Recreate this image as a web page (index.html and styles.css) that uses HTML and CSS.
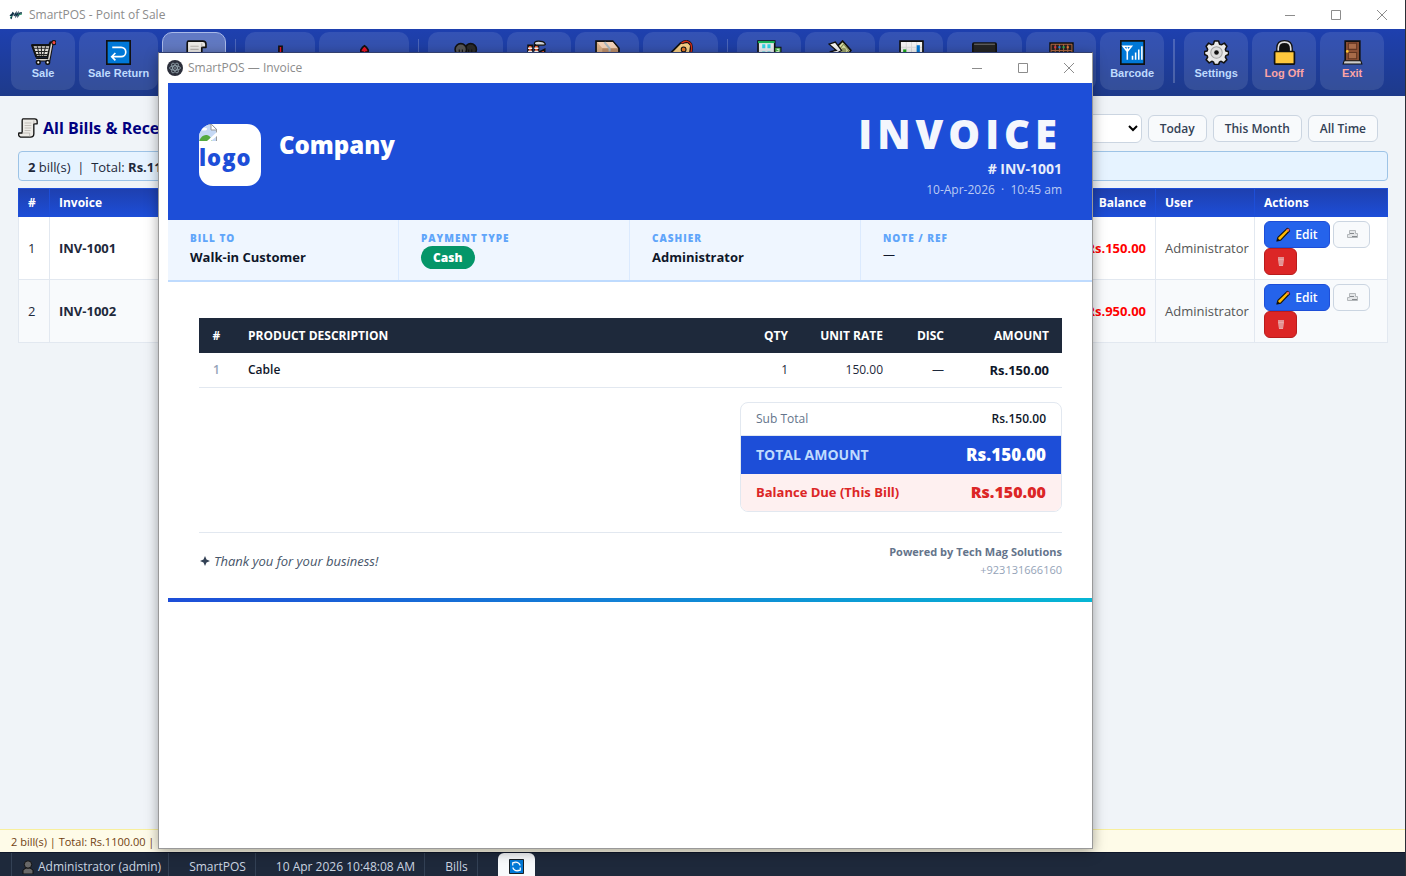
FILE: index.html
```html
<!DOCTYPE html>
<html lang="en">
<head>
    <meta charset="UTF-8">
    <meta name="viewport" content="width=device-width, initial-scale=1.0">
    <title>SmartPOS - Point of Sale</title>
    <link rel="stylesheet" href="styles.css">
</head>
<body>
    <!-- Shared icons -->
    <svg class="sprite" aria-hidden="true">
        <symbol id="i-scroll" viewBox="0 0 24 24"><path d="M6 1h14q3 0 3 3v3h-4v12q0 4-4 4H3q-3-1-2-5h4V4q0-3 1-3z" fill="#eceae6" stroke="#111" stroke-width="1.600" stroke-linejoin="round"/><path d="M19 7V3M5 18h9v4M8 6h8M8 9h8M8 12h8M8 15h7" fill="none" stroke="#b9b5b0" stroke-width="1"/></symbol>
        <symbol id="i-pencil" viewBox="0 0 16 16"><path d="M1 15l1-4L12 1.500q2 0 2.500 2.500L5 14z" fill="#ffb900" stroke="#111" stroke-width="1.200" stroke-linejoin="round"/><path d="M11 2.500l2.500 2.500 1-2-1.500-1.500z" fill="#e6606a"/><path d="M1 15l1-3 2 2z" fill="#111"/></symbol>
        <symbol id="i-print" viewBox="0 0 12 12"><path d="M3.500 2.500h6v3h2v4h-10v-3h2z" fill="#e4e6e8" stroke="#b3b7ba"/><path d="M4 5.500h4M6 8.500h5" stroke="#85898d"/></symbol>
        <symbol id="i-trash" viewBox="0 0 10 12"><path d="M2 2h6v2l-1 7H3L2 4z" fill="#eba7a7"/><path d="M2 3h6M4 5v5M6 5v5" stroke="#d98080"/></symbol>
        <symbol id="i-min" viewBox="0 0 12 12"><path d="M1 6.500h10" stroke="#8c8c8c"/></symbol>
        <symbol id="i-max" viewBox="0 0 12 12"><path d="M1.500 1.500h9v9h-9z" fill="none" stroke="#8c8c8c"/></symbol>
        <symbol id="i-close" viewBox="0 0 12 12"><path d="M1 1l10 10M11 1L1 11" stroke="#8c8c8c"/></symbol>
    </svg>

    <div class="app">
        <header class="titlebar">
            <svg class="app-logo" viewBox="0 0 14 10"><path d="M1 6l3-3M2 6q2-1 3-3M4 2L2 9M5 6l2-3v3l2-3v3l2-3h2" fill="none" stroke="#12344a" stroke-width="1.300"/><path d="M1 8l2-2M9 5l4-1" stroke="#2c9a68"/></svg>
            <span class="titlebar-text">SmartPOS - Point of Sale</span>
            <div class="win-controls">
                <button aria-label="Minimize"><svg><use href="#i-min"/></svg></button>
                <button aria-label="Maximize"><svg><use href="#i-max"/></svg></button>
                <button aria-label="Close"><svg><use href="#i-close"/></svg></button>
            </div>
        </header>

        <nav class="toolbar">
            <button class="tool"><svg viewBox="0 0 24 24"><path d="M1 6h17l2-4" fill="none" stroke="#111" stroke-width="4"/><path d="M1 5h18l-3 11H5z" fill="#e3dfda" stroke="#111" stroke-width="2" stroke-linejoin="round"/><path d="M2 8h15M3 11h13M4 14h12M6 6l2 9M10 6v9M14 6l-2 9" stroke="#222"/><path d="M5 19h12l3-16 2-1" fill="none" stroke="#111" stroke-width="3.500"/><path d="M5 19h12l3-16" fill="none" stroke="#d9d4cf" stroke-width="1.500"/><circle cx="22" cy="2.500" r="2" fill="#f4473b" stroke="#111"/><circle cx="7" cy="21.500" r="1.800" fill="#fff" stroke="#111" stroke-width="1.500"/><circle cx="16" cy="21.500" r="1.800" fill="#fff" stroke="#111" stroke-width="1.500"/></svg><span>Sale</span></button>
            <button class="tool"><svg viewBox="0 0 24 24"><rect x=".8" y=".8" width="22.400" height="22.400" fill="#0078d7" stroke="#111" stroke-width="1.600"/><path d="M6 7h8.500a4.500 4.500 0 0 1 0 9H6M9 12.500L5.500 16l3.500 3.500" fill="none" stroke="#fff" stroke-width="1.600"/></svg><span>Sale Return</span></button>
            <button class="tool active" aria-label="Bills"><svg><use href="#i-scroll"/></svg></button>
            <i class="divider"></i>
            <button class="tool medium" aria-label="Purchase"><svg viewBox="0 0 24 24"><path d="M10.500 6h3v7h4l-5.500 8-5.500-8h4z" fill="#e81224" stroke="#111" stroke-width="1.600"/></svg></button>
            <button class="tool xlarge" aria-label="Purchase Return"><svg viewBox="0 0 24 24"><path d="M12 5.500q-2 1-3.500 4v2h2V20h3v-8.500h2v-2q-1.500-3-3.500-4z" fill="#e81224" stroke="#111" stroke-width="1.600"/></svg></button>
            <i class="divider"></i>
            <button class="tool large" aria-label="Customers"><svg viewBox="0 0 24 24"><circle cx="17" cy="9" r="5.500" fill="#2b2b2b" stroke="#111" stroke-width="1.500"/><circle cx="7.500" cy="9" r="5.500" fill="#555" stroke="#111" stroke-width="1.500"/><path d="M6 9v3M9 9v3M15 9v3M18 9v3" stroke="#111"/><path d="M1 22q0-7 6-7t6 7zM12 22q0-7 5-7t6 7z" fill="#444" stroke="#111"/></svg></button>
            <button class="tool" aria-label="Suppliers"><svg viewBox="0 0 24 24"><path d="M1 22V5h4v8h2V5h4v7l6-3v4l7-1v10z" fill="#f05a32" stroke="#111" stroke-width="1.500"/><path d="M1 8h4M7 8h4M1 11h4M7 11h4" stroke="#fff" stroke-width="1.500"/><path d="M7 4q0-3 4-3 5 0 6 2 2 2-3 2h-5z" fill="#d2d5d8" stroke="#111" stroke-width="1.200"/></svg></button>
            <button class="tool" aria-label="Products"><svg viewBox="0 0 24 24"><path d="M1 1h16l6 7v15H1z" fill="#d9ae86" stroke="#111" stroke-width="1.600"/><path d="M2 2h15l5 6H7z" fill="#f3d2b8"/><path d="M7 8h15v14H7z" fill="#bc8d68"/><path d="M9 2l5 6v3" fill="none" stroke="#a9b8bf" stroke-width="2"/></svg></button>
            <button class="tool large" aria-label="Categories"><svg viewBox="0 0 24 24"><path d="M1 14L12 3l7-1 3 3-1 8-10 10z" fill="#f7ce85" stroke="#111" stroke-width="1.600"/><circle cx="15" cy="9" r="2.300" fill="#e87524" stroke="#111"/><path d="M13 3q6-4 9 1 2 7-2 12" fill="none" stroke="#111" stroke-width="2.500"/><path d="M13 3q6-4 9 1 2 7-2 12" fill="none" stroke="#d82b18" stroke-width="1.300"/></svg></button>
            <i class="divider"></i>
            <button class="tool" aria-label="Banks"><svg viewBox="0 0 24 24"><path d="M1 1h16v22H1z" fill="#e7ebee" stroke="#111" stroke-width="1.600"/><path d="M1 2h16" stroke="#18b65a" stroke-width="2"/><path d="M5 4h3v4H5zM10 4h3v4h-3zM5 11h3v3H5zM10 11h3v3h-3z" fill="#30d4e4"/><path d="M17 7h6v16h-6z" fill="#4bb74f" stroke="#111"/><path d="M19 9h2v2h-2v2h2" fill="none" stroke="#d9f2ce"/></svg></button>
            <button class="tool medium" aria-label="Expenses"><svg viewBox="0 0 24 24"><path d="M7 8l7-7 8 9-9 12-8-7z" fill="#dde2a8" stroke="#111" stroke-width="1.600"/><path d="M11 9l4-5 5 6-6 7z" fill="none" stroke="#899157"/><circle cx="15" cy="10" r="2.500" fill="#9ba46a"/><path d="M1 4l6-2 6 8-5 3-5-2 5-1z" fill="#f2f2f2" stroke="#111" stroke-width="1.200"/></svg></button>
            <button class="tool" aria-label="Reports"><svg viewBox="0 0 24 24"><path d="M1 1h22v22H1z" fill="#f4f4f4" stroke="#111" stroke-width="1.600"/><path d="M7 2v20M12 2v20M17 2v20M2 7h20" stroke="#ddd"/><path d="M4 9h3v13H4z" fill="#16a817"/><path d="M10 12h3v10h-3z" fill="#e34524"/><path d="M17 5h3v17h-3z" fill="#0078d7"/></svg></button>
            <button class="tool large" aria-label="Cash Book"><svg viewBox="0 0 24 24"><rect x=".8" y="3" width="22.400" height="15" rx="1" fill="#242424" stroke="#111" stroke-width="1.600"/><path d="M2 4h20" stroke="#777"/><path d="M9 18h6v4H9z" fill="#777"/></svg></button>
            <button class="tool medium" aria-label="Accounts"><svg viewBox="0 0 24 24"><path d="M1 3h22v20H1z" fill="#28201d" stroke="#111" stroke-width="1.500"/><path d="M2 4h20M2 10h20M2 16h20M6 4v18M10 4v18M14 4v18M18 4v18M2 4v18M22 4v18" stroke="#ae6641"/><path d="M5 6h2v2H5zM13 12h2v2h-2z" fill="#e83445"/><path d="M9 6h2v2H9zM17 12h2v2h-2z" fill="#1d88df"/><path d="M13 6h2v2h-2zM5 12h2v2H5z" fill="#28ae4b"/><path d="M17 6h2v2h-2zM9 12h2v2H9z" fill="#ed7b38"/></svg></button>
            <button class="tool"><svg viewBox="0 0 24 24"><path d="M.8.8h22.400v22.400H.8z" fill="#0078d7" stroke="#111" stroke-width="1.600"/><path d="M3 6h8L7 11zM7 7v12M12 19v-4M15 19v-7M18 19V9M21 19V6" fill="none" stroke="#fff" stroke-width="1.500"/></svg><span>Barcode</span></button>
            <i class="divider wide"></i>
            <button class="tool"><svg viewBox="0 0 24 24"><path d="M10 1h4l1 3 2 .5L19.500 3 22 6l-1.500 3 .5 1.500 2.500.5v3l-2.500 1-.5 1.500L22 19l-3 3-2.500-1.500-1.500.5-1 2.500h-4L9 21l-1.500-.5L5 22l-3-3 1.500-2.500L3 15l-2.500-1v-3L3 10.500 3.500 9 2 6l2.500-3L7 4.500 9 4z" fill="#e9e9e9" stroke="#111" stroke-width="1.500" stroke-linejoin="round"/><circle cx="12" cy="12" r="5.500" fill="#ddd" stroke="#a5a5a5"/><circle cx="12" cy="12" r="2.200" fill="#111"/></svg><span>Settings</span></button>
            <button class="tool danger"><svg viewBox="0 0 24 24"><path d="M6 12V8q0-6 6-6t6 6v4" fill="#111" stroke="#111" stroke-width="4"/><path d="M6 12V8q0-6 6-6t6 6v4" fill="none" stroke="#dedede" stroke-width="1.600"/><rect x="2.500" y="11" width="19" height="12.200" rx="1" fill="#ffc83d" stroke="#111" stroke-width="1.600"/></svg><span>Log Off</span></button>
            <button class="tool danger"><svg viewBox="0 0 24 24"><path d="M5 1h14v20H5z" fill="#8d5136" stroke="#111" stroke-width="1.600"/><path d="M8 3h8v6H8zM8 12h8v6H8z" fill="#a86b49" stroke="#623520"/><path d="M4 20h16l1 3H3z" fill="#ccc" stroke="#111"/><circle cx="7" cy="11" r="1.300" fill="#ffc52e"/></svg><span>Exit</span></button>
        </nav>

        <main class="content">
            <div class="page-head">
                <h1><svg><use href="#i-scroll"/></svg>All Bills &amp; Rece</h1>
                <div class="filters">
                    <select aria-label="Bill type"><option></option><option>Cash</option><option>Credit</option></select>
                    <button>Today</button>
                    <button>This Month</button>
                    <button>All Time</button>
                </div>
            </div>

            <div class="summary"><b>2</b> bill(s) &nbsp;|&nbsp; Total: <b>Rs.1100.00</b></div>

            <table class="bills">
                <colgroup>
                    <col class="c-no"><col class="c-inv"><col><col class="c-bal"><col class="c-user"><col class="c-act">
                </colgroup>
                <thead>
                    <tr><th>#</th><th>Invoice</th><th></th><th class="num">Balance</th><th>User</th><th>Actions</th></tr>
                </thead>
                <tbody>
                    <tr>
                        <td>1</td><td><b>INV-1001</b></td><td></td>
                        <td class="num due">Rs.150.00</td><td class="user">Administrator</td>
                        <td><div class="actions">
                            <button class="edit"><svg><use href="#i-pencil"/></svg>Edit</button>
                            <button class="print" aria-label="Print"><svg><use href="#i-print"/></svg></button>
                            <button class="delete" aria-label="Delete"><svg><use href="#i-trash"/></svg></button>
                        </div></td>
                    </tr>
                    <tr>
                        <td>2</td><td><b>INV-1002</b></td><td></td>
                        <td class="num due">Rs.950.00</td><td class="user">Administrator</td>
                        <td><div class="actions">
                            <button class="edit"><svg><use href="#i-pencil"/></svg>Edit</button>
                            <button class="print" aria-label="Print"><svg><use href="#i-print"/></svg></button>
                            <button class="delete" aria-label="Delete"><svg><use href="#i-trash"/></svg></button>
                        </div></td>
                    </tr>
                </tbody>
            </table>
        </main>

        <div class="totals-bar">2 bill(s) | Total: Rs.1100.00 |</div>

        <footer class="statusbar">
            <span class="seg user-seg"><svg viewBox="0 0 12 14"><path d="M1 14v-4l3-2h4l3 2v4z" fill="#686868" stroke="#111"/><circle cx="6" cy="4.500" r="3.700" fill="#686868" stroke="#111"/></svg>Administrator (admin)</span>
            <span class="seg">SmartPOS</span>
            <span class="seg">10 Apr 2026 10:48:08 AM</span>
            <span class="seg">Bills</span>
            <button class="refresh" aria-label="Refresh"><svg viewBox="0 0 16 16"><path d="M.5.5h15v15H.5z" fill="#0078d7" stroke="#111"/><path d="M4 7V4h3M4 4q6-2 8 3M12 9v3H9M12 12q-6 2-8-3" fill="none" stroke="#fff" stroke-width="1.300"/></svg></button>
        </footer>
    </div>

    <!-- Invoice window -->
    <section class="invoice-window">
        <header class="titlebar">
            <svg class="electron" viewBox="0 0 16 16"><circle cx="8" cy="8" r="8" fill="#2b2e3a"/><g fill="none" stroke="#a9bcc4" stroke-width=".7"><ellipse cx="8" cy="8" rx="5.500" ry="2.200"/><ellipse cx="8" cy="8" rx="5.500" ry="2.200" transform="rotate(60 8 8)"/><ellipse cx="8" cy="8" rx="5.500" ry="2.200" transform="rotate(120 8 8)"/></g><circle cx="8" cy="8" r=".8" fill="#a9bcc4"/></svg>
            <span class="titlebar-text">SmartPOS — Invoice</span>
            <div class="win-controls">
                <button aria-label="Minimize"><svg><use href="#i-min"/></svg></button>
                <button aria-label="Maximize"><svg><use href="#i-max"/></svg></button>
                <button aria-label="Close"><svg><use href="#i-close"/></svg></button>
            </div>
        </header>

        <div class="invoice">
            <div class="inv-head">
                <div class="brand">
                    <div class="logo-box">
                        <svg viewBox="0 0 18 17"><path d="M0 0h13l5 5v12H0z" fill="#c5d8f4"/><path d="M0 .500h12.500l5 5V17" fill="none" stroke="#9a9a9a"/><path d="M12 0v6h6z" fill="#fff" stroke="#9a9a9a"/><ellipse cx="5" cy="5" rx="3" ry="1.500" fill="#fff"/><path d="M0 17q3-7 8-6 4 1 5 6z" fill="#53a93f"/><path d="M8 17L18 8v4l-6 5z" fill="#fff"/></svg>
                        <span>logo</span>
                    </div>
                    <h2>Company</h2>
                </div>
                <div class="inv-title">
                    <div class="word">INVOICE</div>
                    <div class="inv-no"># INV-1001</div>
                    <div class="inv-date">10-Apr-2026 &nbsp;·&nbsp; 10:45 am</div>
                </div>
            </div>

            <div class="inv-meta">
                <div><h3>BILL TO</h3><p>Walk-in Customer</p></div>
                <div><h3>PAYMENT TYPE</h3><span class="badge">Cash</span></div>
                <div><h3>CASHIER</h3><p>Administrator</p></div>
                <div><h3>NOTE / REF</h3><p class="note">—</p></div>
            </div>

            <div class="inv-body">
                <table class="items">
                    <colgroup><col class="c-n"><col><col class="c-qty"><col class="c-rate"><col class="c-disc"><col class="c-amt"></colgroup>
                    <thead>
                        <tr><th class="ctr">#</th><th>PRODUCT DESCRIPTION</th><th class="num">QTY</th><th class="num">UNIT RATE</th><th class="num">DISC</th><th class="num">AMOUNT</th></tr>
                    </thead>
                    <tbody>
                        <tr><td class="ctr idx">1</td><td class="prod">Cable</td><td class="num">1</td><td class="num">150.00</td><td class="num">—</td><td class="num amt">Rs.150.00</td></tr>
                    </tbody>
                </table>

                <div class="totals">
                    <div class="row sub"><span>Sub Total</span><b>Rs.150.00</b></div>
                    <div class="row grand"><span>TOTAL AMOUNT</span><b>Rs.150.00</b></div>
                    <div class="row balance"><span>Balance Due (This Bill)</span><b>Rs.150.00</b></div>
                </div>

                <div class="inv-foot">
                    <em><svg viewBox="0 0 10 10"><path d="M5 0l1.500 3.500L10 5 6.500 6.500 5 10 3.500 6.500 0 5l3.500-1.500z" fill="#334155"/></svg>Thank you for your business!</em>
                    <div class="powered"><b>Powered by Tech Mag Solutions</b><span>+923131666160</span></div>
                </div>
            </div>
            <div class="stripe"></div>
        </div>
    </section>
</body>
</html>
```

FILE: styles.css
```css
* {
    box-sizing: border-box;
}

body {
    margin: 0;
    font-family: "Segoe UI", "Open Sans", sans-serif;
    font-size: 13px;
    line-height: 18px;
    color: #1e293b;
}

h1, h2, h3, p {
    margin: 0;
}

button, select {
    font-family: inherit;
    font-size: 12px;
    padding: 0;
}

.sprite {
    display: none;
}

.app {
    display: flex;
    flex-direction: column;
    height: 100vh;
    background: #f0f4f8;
    border-right: 1px solid #2b2f36;
}

/* Window title bars */
.titlebar {
    display: flex;
    align-items: center;
    flex: none;
    height: 29px;
    padding-left: 9px;
    background: #fff;
    color: #8c8c8c;
    font-size: 12px;
}

.app-logo {
    width: 14px;
    height: 10px;
    margin-right: 6px;
}

.titlebar-text {
    flex: 1;
}

.win-controls {
    display: flex;
}

.win-controls button {
    display: flex;
    align-items: center;
    justify-content: center;
    width: 46px;
    height: 28px;
    border: 0;
    background: none;
}

.win-controls svg {
    width: 12px;
    height: 12px;
}

/* Main toolbar */
.toolbar {
    display: flex;
    gap: 4px;
    flex: none;
    height: 67px;
    padding: 3px 11px;
    background: linear-gradient(#1e40af, #1e3a8a);
}

.tool {
    display: flex;
    flex-direction: column;
    align-items: center;
    flex: none;
    min-width: 64px;
    height: 58px;
    padding: 8px 9px 0;
    border: 0;
    border-radius: 10px;
    background: rgba(255, 255, 255, 0.1);
    color: #bfdbfe;
    font: bold 11px/15px "Liberation Sans", Arial, sans-serif;
}

.tool.medium { min-width: 70px; }
.tool.large { min-width: 75px; }
.tool.xlarge { min-width: 90px; }

.tool svg {
    width: 25px;
    height: 25px;
    margin-bottom: 1px;
}

.tool.active {
    border: 1px solid #a9b9e8;
    background: rgba(255, 255, 255, 0.3);
    padding-top: 7px;
}

.tool.danger {
    color: #fca5a5;
}

.divider {
    flex: none;
    width: 1px;
    height: 44px;
    margin: 7px 5px;
    background: rgba(255, 255, 255, 0.2);
}

.divider.wide {
    width: 2px;
}

/* Bills page */
.content {
    flex: 1;
    padding: 17px 17px 0 18px;
}

.page-head {
    display: flex;
    align-items: center;
    justify-content: space-between;
    height: 30px;
    margin-bottom: 8px;
    padding-right: 10px;
}

.page-head h1 {
    display: flex;
    align-items: center;
    gap: 5px;
    color: #000080;
    font-size: 16px;
    font-weight: 700;
}

.page-head h1 svg {
    width: 20px;
    height: 20px;
}

.filters {
    display: flex;
    align-items: center;
    gap: 6px;
}

.filters select {
    width: 150px;
    height: 29px;
    padding-left: 8px;
    border: 1px solid #cbd5e1;
    border-radius: 6px;
    background: #fff;
}

.filters button {
    height: 27px;
    padding: 0 11px;
    border: 1px solid #cbd5e1;
    border-radius: 6px;
    background: #f8fafc;
    color: #334155;
    font-weight: 600;
}

.summary {
    height: 30px;
    margin-bottom: 7px;
    padding: 6px 9px;
    border: 1px solid #9dc3e6;
    border-radius: 4px;
    background: #e6f3ff;
}

.bills {
    width: 100%;
    table-layout: fixed;
    border-collapse: collapse;
    background: #fff;
}

.bills .c-no { width: 31px; }
.bills .c-inv { width: 130px; }
.bills .c-bal { width: 110px; }
.bills .c-user { width: 99px; }
.bills .c-act { width: 133px; }

.bills tr {
    height: 63px;
}

.bills thead tr {
    height: 28px;
    background: linear-gradient(#1e40af, #1d4ed8);
}

.bills th {
    padding: 0 9px;
    border: 1px solid #1d4ed8;
    color: #fff;
    font-size: 12px;
    text-align: left;
}

.bills td {
    padding: 3px 9px 4px;
    border: 1px solid #e2e8f0;
}

.bills tbody tr:nth-child(even) {
    background: #f8fafc;
}

.bills .num, .items .num {
    text-align: right;
}

.bills .due {
    color: #f00;
    font-weight: 700;
}

.bills .user {
    padding-right: 0;
    color: #555;
}

.actions {
    display: flex;
    flex-wrap: wrap;
    column-gap: 3px;
}

.actions button {
    display: flex;
    align-items: center;
    justify-content: center;
    height: 27px;
    border: 1px solid #cbd5e1;
    border-radius: 6px;
    background: #f8fafc;
}

.actions .edit {
    gap: 4px;
    width: 66px;
    border-color: #1d4ed8;
    background: #2563eb;
    color: #fff;
    font-weight: 600;
}

.actions .edit svg {
    width: 15px;
    height: 15px;
}

.actions .print {
    width: 37px;
}

.actions .print svg {
    width: 12px;
    height: 12px;
}

.actions .delete {
    width: 33px;
    border-color: #b91c1c;
    background: #dc2626;
}

.actions .delete svg {
    width: 10px;
    height: 12px;
}

/* Bottom bars */
.totals-bar {
    flex: none;
    height: 23px;
    padding: 3px 11px;
    border-top: 1px solid #f8ef9c;
    background: #fefbe8;
    color: #713f12;
    font-size: 11px;
}

.statusbar {
    display: flex;
    flex: none;
    height: 24px;
    padding-left: 11px;
    border-top: 1px solid #0f172a;
    background: #1e293b;
    color: #cbd5e1;
    font-size: 12px;
}

.seg {
    padding: 5px 9px 0 20px;
    border-right: 1px solid #334155;
}

.user-seg {
    display: flex;
    gap: 4px;
    padding-right: 7px;
    padding-left: 10px;
    border-left: 1px solid #334155;
}

.user-seg svg {
    width: 12px;
    height: 14px;
    margin-top: 2px;
}

.refresh {
    width: 37px;
    margin-left: 20px;
    padding-top: 6px;
    border: 0;
    border-radius: 6px 6px 0 0;
    background: #f8fafc;
}

.refresh svg {
    width: 15px;
    height: 15px;
}

/* Invoice window */
.invoice-window {
    position: absolute;
    top: 52px;
    right: 313px;
    bottom: 27px;
    left: 158px;
    border: 1px solid #999;
    border-top-color: #33406e;
    background: #fff;
    box-shadow: 0 3px 12px rgba(0, 0, 0, 0.35);
}

.invoice-window .titlebar {
    height: 30px;
    padding-left: 8px;
}

.electron {
    width: 16px;
    height: 16px;
    margin-right: 5px;
}

.invoice {
    margin-left: 9px;
}

.inv-head {
    display: flex;
    justify-content: space-between;
    align-items: flex-start;
    padding: 30px 30px 21px 31px;
    background: #1d4ed8;
    color: #fff;
}

.brand {
    display: flex;
    gap: 18px;
    padding-top: 11px;
}

.logo-box {
    width: 62px;
    height: 62px;
    overflow: hidden;
    border-radius: 14px;
    background: #fff;
    color: #1d4ed8;
    font-size: 22px;
    font-weight: 800;
    letter-spacing: 1px;
}

.logo-box svg {
    display: block;
    width: 18px;
    height: 17px;
}

.logo-box span {
    display: block;
    line-height: 32px;
}

.brand h2 {
    font-size: 24px;
    font-weight: 800;
    line-height: 42px;
}

.inv-title {
    text-align: right;
}

.inv-title .word {
    color: #f4f6fd;
    font-size: 40px;
    font-weight: 800;
    line-height: 42px;
    letter-spacing: 5px;
}

.inv-title .inv-no {
    margin-top: 4px;
    color: #e8edfb;
    font-size: 14px;
    font-weight: 700;
    line-height: 20px;
}

.inv-title .inv-date {
    margin-top: 2px;
    color: #bbcaf3;
    font-size: 12px;
}

.inv-meta {
    display: grid;
    grid-template-columns: repeat(4, 1fr);
    height: 62px;
    border-bottom: 2px solid #bfdbfe;
    background: #eff6ff;
}

.inv-meta > div {
    padding: 11px 22px 0;
    border-right: 1px solid #dbeafe;
}

.inv-meta > div:last-child {
    border-right: 0;
}

.inv-meta h3 {
    color: #60a5fa;
    font-size: 10px;
    font-weight: 800;
    line-height: 14px;
    letter-spacing: 1px;
}

.inv-meta p {
    margin-top: 3px;
    color: #0f172a;
    font-weight: 700;
}

.inv-meta .note {
    margin-top: 1px;
    font-size: 12px;
    font-weight: 400;
}

.badge {
    display: inline-block;
    margin-top: 1px;
    padding: 0 12px;
    border-radius: 12px;
    background: #059669;
    color: #fff;
    font-size: 12px;
    font-weight: 800;
    line-height: 23px;
}

.inv-body {
    padding: 36px 30px 19px 31px;
}

.items {
    width: 100%;
    table-layout: fixed;
    border-collapse: collapse;
}

.items .c-n { width: 35px; }
.items .c-qty { width: 90px; }
.items .c-rate { width: 95px; }
.items .c-disc { width: 61px; }
.items .c-amt { width: 105px; }

.items th {
    height: 35px;
    padding: 0 13px 0 14px;
    background: #1e293b;
    color: #fff;
    font-size: 12px;
    text-align: left;
    white-space: nowrap;
}

.items td {
    height: 34px;
    padding: 0 13px 0 14px;
    border-bottom: 1px solid #e2e8f0;
    font-size: 12px;
}

.items .ctr {
    padding: 0;
    text-align: center;
}

.items .idx {
    color: #94a3b8;
    font-weight: 600;
}

.items .prod {
    color: #0f172a;
    font-weight: 600;
}

.items .amt {
    color: #0f172a;
    font-size: 13px;
    font-weight: 700;
}

.totals {
    width: 322px;
    margin: 14px 0 20px auto;
    overflow: hidden;
    border: 1px solid #e2e8f0;
    border-radius: 8px;
}

.totals .row {
    display: flex;
    align-items: center;
    justify-content: space-between;
    height: 38px;
    padding: 0 15px;
}

.totals .sub {
    height: 33px;
    border-bottom: 1px solid #e2e8f0;
    color: #64748b;
    font-size: 12px;
}

.totals .sub b {
    color: #0f172a;
    font-weight: 600;
}

.totals .grand {
    background: #1d4ed8;
    color: #bfdbfe;
    font-size: 14px;
    font-weight: 700;
}

.totals .grand b {
    color: #fff;
    font-size: 17px;
    font-weight: 800;
}

.totals .balance {
    height: 37px;
    background: #fef0f0;
    color: #dc2626;
    font-weight: 700;
}

.totals .balance b {
    font-size: 16px;
    font-weight: 800;
}

.inv-foot {
    display: flex;
    align-items: center;
    justify-content: space-between;
    padding-top: 10px;
    border-top: 1px solid #e2e8f0;
}

.inv-foot em {
    color: #475569;
}

.inv-foot em svg {
    width: 10px;
    height: 10px;
    margin: 0 4px 0 1px;
}

.powered {
    display: flex;
    flex-direction: column;
    color: #94a3b8;
    font-size: 11px;
    text-align: right;
}

.powered b {
    color: #64748b;
}

.stripe {
    height: 4px;
    background: linear-gradient(90deg, #1d4ed8, #06b6d4);
}
```
